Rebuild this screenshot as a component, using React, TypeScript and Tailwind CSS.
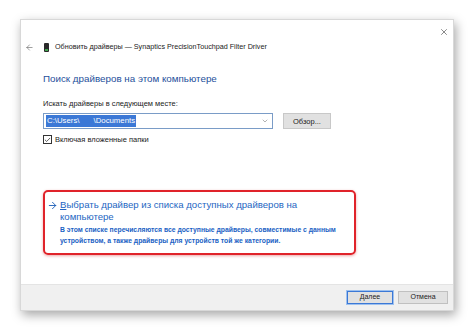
import { ChevronDown, X, ArrowLeft, ArrowRight, Check } from "lucide-react";

const App = () => {
  return (
    <div className="w-[474px] h-[331px] bg-white overflow-hidden pt-[19px] pl-[20px] font-['Liberation_Sans',Arial,sans-serif]">
      <div className="w-[434px] h-[292px] bg-white border border-[#d8d8d8] shadow-[2px_4px_10px_rgba(0,0,0,0.35)] flex flex-col">
        <div className="h-[18px] flex justify-end items-center pr-[4px] pt-[6px]">
          <X className="w-[10px] h-[10px] text-[#444]" strokeWidth={1.5} />
        </div>
        <div className="flex items-center h-[18px] pl-[4px] gap-[6px]">
          <ArrowLeft className="w-[9px] h-[9px] text-[#555]" strokeWidth={1.5} />
          <div className="w-[5px] h-[9px] bg-[#2a2a2a] ml-[4px] rounded-[1px] flex items-end justify-center">
            <div className="w-[3px] h-[2px] bg-[#3fa34d] mb-[1px]" />
          </div>
          <span className="text-[7.2px] text-[#222] leading-none whitespace-nowrap">
            Обновить драйверы — Synaptics PrecisionTouchpad Filter Driver
          </span>
        </div>
        <div className="flex-1 pl-[22px] pr-[20px] pt-[18px]">
          <div className="text-[9.8px] text-[#1e4f9b] leading-none whitespace-nowrap">Поиск драйверов на этом компьютере</div>
          <div className="text-[7.5px] text-[#222] mt-[16px] leading-none whitespace-nowrap">Искать драйверы в следующем месте:</div>
          <div className="flex items-center mt-[6px] gap-[10px]">
            <div className="w-[230px] h-[16px] border border-[#7a9cc7] flex items-center pl-[2px] pr-[3px]">
              <span className="bg-[#3b78d6] text-white text-[7.8px] leading-none px-[1px] py-[2px] whitespace-nowrap">
                C:\Users\<span className="inline-block w-[14px]" />\Documents
              </span>
              <ChevronDown className="ml-auto w-[8px] h-[8px] text-[#666]" strokeWidth={1.5} />
            </div>
            <div className="w-[48px] h-[16px] bg-[#e1e1e1] border border-[#c8c8c8] flex items-center justify-center text-[7.5px] text-[#222]">
              Обзор...
            </div>
          </div>
          <div className="flex items-center mt-[6px] gap-[3px]">
            <div className="w-[9px] h-[9px] border border-[#333] flex items-center justify-center bg-white">
              <Check className="w-[8px] h-[8px] text-[#222]" strokeWidth={2.5} />
            </div>
            <span className="text-[7.5px] text-[#222] leading-none whitespace-nowrap">Включая вложенные папки</span>
          </div>
          <div className="mt-[46px] w-[313px] h-[65px] border-[2px] border-[#e0232a] rounded-[5px] shadow-[0_1px_3px_rgba(200,0,0,0.35)] pl-[2px] pt-[7px]">
            <div className="flex items-start gap-[2px]">
              <ArrowRight className="w-[11px] h-[11px] text-[#1e5fb8] mt-[1px] shrink-0" strokeWidth={2} />
              <div>
                <div className="text-[9.6px] leading-[12px] text-[#2466c2] whitespace-nowrap">
                  <span className="underline">В</span>ыбрать драйвер из списка доступных драйверов на
                  <br />
                  компьютере
                </div>
                <div className="text-[6.8px] leading-[11px] text-[#1a5fc4] font-bold mt-[1px] whitespace-nowrap">
                  В этом списке перечисляются все доступные драйверы, совместимые с данным
                  <br />
                  устройством, а также драйверы для устройств той же категории.
                </div>
              </div>
            </div>
          </div>
        </div>
        <div className="h-[26px] bg-[#f0f0f0] border-t border-[#e4e4e4] flex items-center justify-end gap-[5px] pr-[5px]">
          <div className="w-[46px] h-[13px] border border-[#3b78d6] bg-[#e1e1e1] flex items-center justify-center text-[7px] text-[#222] outline outline-1 outline-[#9ec1ef]">
            Далее
          </div>
          <div className="w-[50px] h-[13px] border border-[#c0c0c0] bg-[#e1e1e1] flex items-center justify-center text-[7px] text-[#222]">
            Отмена
          </div>
        </div>
      </div>
    </div>
  );
};

export default App;
